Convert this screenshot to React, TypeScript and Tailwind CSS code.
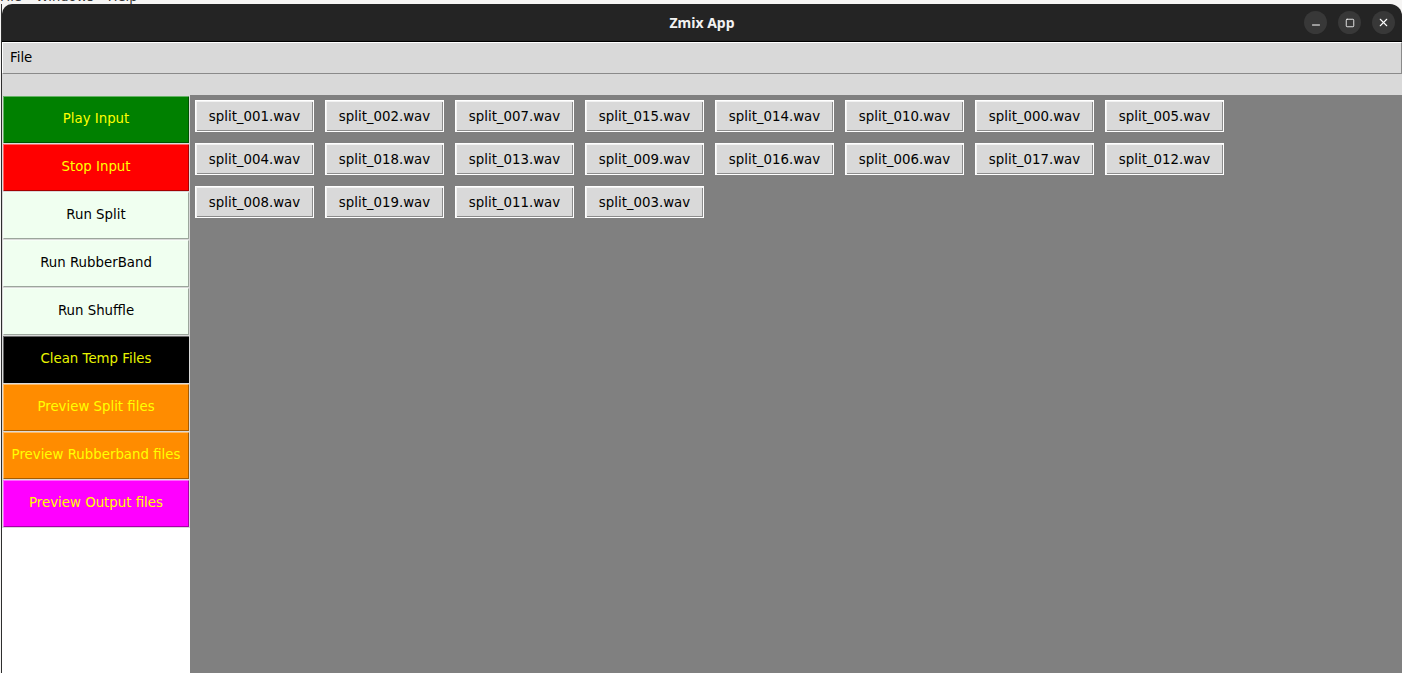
import * as React from "react"
import { Minus, Square, X } from "lucide-react"

interface SideAction {
  label: string
  className: string
}

const sideActions: SideAction[] = [
  { label: "Play Input", className: "bg-[#008000] text-[#ffff00]" },
  { label: "Stop Input", className: "bg-[#ff0000] text-[#ffff00]" },
  { label: "Run Split", className: "bg-[#f0fff0] text-black" },
  { label: "Run RubberBand", className: "bg-[#f0fff0] text-black" },
  { label: "Run Shuffle", className: "bg-[#f0fff0] text-black" },
  { label: "Clean Temp Files", className: "bg-black text-[#e8f500]" },
  { label: "Preview Split files", className: "bg-[#ff8c00] text-[#ffff00]" },
  { label: "Preview Rubberband files", className: "bg-[#ff8c00] text-[#ffff00]" },
  { label: "Preview Output files", className: "bg-[#ff00ff] text-[#ffff00]" },
]

const files = [
  "split_001.wav", "split_002.wav", "split_007.wav", "split_015.wav",
  "split_014.wav", "split_010.wav", "split_000.wav", "split_005.wav",
  "split_004.wav", "split_018.wav", "split_013.wav", "split_009.wav",
  "split_016.wav", "split_006.wav", "split_017.wav", "split_012.wav",
  "split_008.wav", "split_019.wav", "split_011.wav", "split_003.wav",
]

function WindowButton({ children }: { children: React.ReactNode }) {
  return (
    <div className="flex h-[23px] w-[23px] items-center justify-center rounded-full bg-[#383838] text-white">
      {children}
    </div>
  )
}

export default function App() {
  return (
    <div className="flex h-[673px] w-[1402px] flex-col overflow-hidden bg-[#f6f5f4] font-['DejaVu_Sans',sans-serif] text-[13.33px]">
      {/* app behind, mostly hidden */}
      <div className="h-[4px] overflow-hidden">
        <div className="-mt-[11px] flex gap-[14px] text-[13px] leading-[15px] text-[#333]">
          <span>File</span>
          <span>Windows</span>
          <span>Help</span>
        </div>
      </div>

      <div className="ml-px flex flex-1 flex-col border-l border-[#2e2e2e]">
        {/* Title bar */}
        <div className="relative flex h-[38px] items-center justify-center rounded-tl-[10px] rounded-tr-[12px] border-b border-black bg-[#242424]">
          <span className="font-['Noto_Sans',sans-serif] text-[14px] font-bold text-[#f2f2f2]">Zmix App</span>
          <div className="absolute right-[7px] top-[7px] flex gap-[11px]">
            <WindowButton>
              <Minus size={12} strokeWidth={2} className="mt-[5px]" />
            </WindowButton>
            <WindowButton>
              <Square size={10} strokeWidth={2} />
            </WindowButton>
            <WindowButton>
              <X size={13} strokeWidth={2} />
            </WindowButton>
          </div>
        </div>

        {/* Menu bar */}
        <div className="flex h-[32px] items-center border-t border-l border-white border-b border-b-[#8a8a8a] border-r border-r-[#8a8a8a] bg-[#d9d9d9] pl-[7px] text-black">
          <span>File</span>
        </div>
        <div className="h-[21px] bg-[#d9d9d9]" />

        {/* Body */}
        <div className="flex flex-1">
          <div className="flex w-[188px] flex-col bg-white">
            <div className="flex flex-col gap-px bg-[#d9d9d9] p-px">
              {sideActions.map((a) => (
                <button
                  key={a.label}
                  className={`flex h-[47px] w-full items-center justify-center pb-px leading-[16px] shadow-[inset_1px_1px_0_rgba(255,255,255,0.4),inset_-1px_-1px_0_rgba(0,0,0,0.35)] ${a.className}`}
                >
                  {a.label}
                </button>
              ))}
            </div>
          </div>

          <div className="flex-1 bg-[#808080] p-[5px]">
            <div className="grid grid-cols-[repeat(8,119px)] gap-[11px]">
              {files.map((f) => (
                <button
                  key={f}
                  className="flex h-[32px] w-[119px] items-center justify-center border border-white bg-[#d9d9d9] pt-px leading-[16px] text-black shadow-[inset_1px_1px_0_#f2f2f2,inset_-1px_-1px_0_#8c8c8c]"
                >
                  {f}
                </button>
              ))}
            </div>
          </div>
        </div>
      </div>
    </div>
  )
}
